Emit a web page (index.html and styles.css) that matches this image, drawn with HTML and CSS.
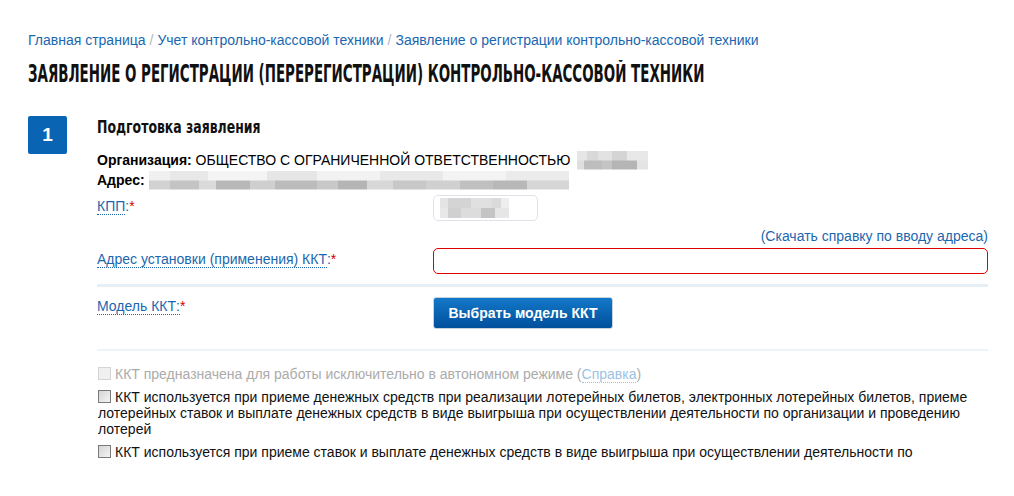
FILE: index.html
```html
<!DOCTYPE html>
<html lang="ru">
<head>
<meta charset="utf-8">
<title>Заявление о регистрации ККТ</title>
<link rel="stylesheet" href="styles.css">
</head>
<body>
<div class="page">
  <nav class="crumbs">
    <a href="#">Главная страница</a><span class="sep">/</span><a href="#">Учет контрольно-кассовой техники</a><span class="sep">/</span><a href="#">Заявление о регистрации контрольно-кассовой техники</a>
  </nav>
  <h1 class="title"><span class="squeeze">ЗАЯВЛЕНИЕ О РЕГИСТРАЦИИ (ПЕРЕРЕГИСТРАЦИИ) КОНТРОЛЬНО-КАССОВОЙ ТЕХНИКИ</span></h1>

  <section class="step">
    <div class="badge">1</div>
    <div class="step-body">
      <h2 class="step-title"><span class="squeeze2">Подготовка заявления</span></h2>
      <div class="info">
        <div class="info-line"><b>Организация:</b> ОБЩЕСТВО С ОГРАНИЧЕННОЙ ОТВЕТСТВЕННОСТЬЮ <span class="blur blur-org"></span></div>
        <div class="info-line"><b>Адрес:</b> <span class="blur blur-addr"></span></div>
      </div>

      <div class="row row-kpp">
        <div class="label"><span class="term">КПП</span>:<span class="req">*</span></div>
        <div class="field"><div class="input input-kpp"><span class="blur blur-kpp"></span></div></div>
      </div>

      <div class="help"><a href="#">(Скачать справку по вводу адреса)</a></div>

      <div class="row row-addr">
        <div class="label"><span class="term">Адрес установки (применения) ККТ</span>:<span class="req">*</span></div>
        <div class="field"><div class="input input-error"></div></div>
      </div>

      <div class="row row-model">
        <div class="label"><span class="term">Модель ККТ:</span><span class="req">*</span></div>
        <div class="field"><button class="btn">Выбрать модель ККТ</button></div>
      </div>

      <div class="checks">
        <label class="check disabled"><span class="box"></span>ККТ предназначена для работы исключительно в автономном режиме (<span class="hint">Справка</span>)</label>
        <label class="check"><span class="box"></span>ККТ используется при приеме денежных средств при реализации лотерейных билетов, электронных лотерейных билетов, приеме лотерейных ставок и выплате денежных средств в виде выигрыша при осуществлении деятельности по организации и проведению лотерей</label>
        <label class="check"><span class="box"></span>ККТ используется при приеме ставок и выплате денежных средств в виде выигрыша при осуществлении деятельности по</label>
      </div>
    </div>
  </section>
</div>
</body>
</html>
```

FILE: styles.css
```css
html, body {
  margin: 0;
  padding: 0;
  background: #fff;
}
body {
  font-family: "Liberation Sans", Arial, sans-serif;
  font-size: 14px;
  color: #000;
}
.page {
  padding: 32px 26px 0 28px;
}
a {
  color: #1a67b0;
  text-decoration: none;
}
.crumbs {
  font-size: 14px;
  line-height: 16px;
  color: #1a67b0;
}
.crumbs .sep {
  color: #b0b8c0;
  margin: 0 4px;
}
.title {
  margin: 12px 0 0 0;
  font-family: "DejaVu Sans Condensed", "DejaVu Sans", sans-serif;
  font-stretch: condensed;
  font-weight: bold;
  font-size: 24px;
  line-height: 28px;
  height: 28px;
  color: #111;
  white-space: nowrap;
  overflow: hidden;
}
.squeeze {
  display: inline-block;
  transform: scaleX(0.621);
  transform-origin: 0 50%;
}
.step {
  display: flex;
  gap: 30px;
  margin-top: 28px;
}
.badge {
  flex: none;
  width: 39px;
  height: 38px;
  background: #0a64b4;
  border-radius: 2px;
  color: #fff;
  font-weight: bold;
  font-size: 19px;
  display: flex;
  align-items: center;
  justify-content: center;
}
.step-body {
  flex: 1;
  min-width: 0;
}
.step-title {
  margin: 1px 0 0 0;
  font-family: "DejaVu Sans Condensed", "DejaVu Sans", sans-serif;
  font-stretch: condensed;
  font-weight: bold;
  font-size: 18px;
  line-height: 20px;
  height: 20px;
  color: #111;
  white-space: nowrap;
  overflow: hidden;
}
.squeeze2 {
  display: inline-block;
  transform: scaleX(0.77);
  transform-origin: 0 50%;
}
.info {
  margin-top: 13px;
}
.info-line {
  line-height: 20px;
  height: 20px;
  display: flex;
  align-items: center;
  white-space: pre;
}
.blur {
  display: inline-block;
}
.blur-org {
  width: 71px;
  height: 19px;
  margin-left: 3px;
  background:
    linear-gradient(90deg, #e6e6e6 0 14%, #d8d8d8 14% 30%, #e2e2e2 30% 50%, #d4d4d4 50% 70%, #e8e8e8 70% 100%) top / 100% 50% no-repeat,
    linear-gradient(90deg, #dedede 0 10%, #bdbdbd 10% 35%, #c4c4c4 35% 50%, #b5b5b5 50% 85%, #e4e4e4 85% 100%) bottom / 100% 50% no-repeat;
}
.blur-addr {
  width: 420px;
  height: 19px;
  margin-left: 4px;
  background:
    linear-gradient(90deg, #f0f0f0 0 5%, #e8e8e8 5% 14%, #f4f4f4 14% 28%, #e6e6e6 28% 40%, #f2f2f2 40% 55%, #e9e9e9 55% 70%, #f3f3f3 70% 85%, #ebebeb 85% 100%) top / 100% 50% no-repeat,
    linear-gradient(90deg, #d2d2d2 0 5%, #c4c4c4 5% 12%, #dadada 12% 16%, #b8b8b8 16% 24%, #cfcfcf 24% 30%, #bcbcbc 30% 40%, #c8c8c8 40% 45%, #b5b5b5 45% 52%, #d8d8d8 52% 58%, #c8c8c8 58% 66%, #d0d0d0 66% 74%, #c0c0c0 74% 82%, #b8b8b8 82% 90%, #d6d6d6 90% 100%) bottom / 100% 50% no-repeat;
}
.row {
  display: flex;
}
.label {
  width: 336px;
  flex: none;
  color: #1a67b0;
  line-height: 16px;
}
.term {
  border-bottom: 1px dotted #1a67b0;
}
.req {
  color: #d40000;
}
.field {
  flex: 1;
}
.row-kpp {
  margin-top: 5px;
}
.row-kpp .label {
  padding-top: 3px;
}
.input {
  box-sizing: border-box;
  height: 26px;
  border: 1px solid #dde3e9;
  border-radius: 5px;
  background: #fff;
}
.input-kpp {
  width: 105px;
  display: flex;
  align-items: center;
  padding-left: 6px;
}
.blur-kpp {
  width: 69px;
  height: 20px;
  background:
    linear-gradient(90deg, #e4e4e4 0 12%, #d4d4d4 12% 45%, #e0e0e0 45% 75%, #dadada 75% 88%, #eeeeee 88% 100%) top / 100% 50% no-repeat,
    linear-gradient(90deg, #e8e8e8 0 12%, #d0d0d0 12% 30%, #dcdcdc 30% 60%, #c4c4c4 60% 80%, #e6e6e6 80% 100%) bottom / 100% 50% no-repeat;
}
.help {
  text-align: right;
  margin-top: 7px;
  line-height: 16px;
}
.row-addr {
  margin-top: 4px;
  padding-bottom: 10px;
  border-bottom: 3px solid #e6eef6;
}
.row-addr .label {
  padding-top: 3px;
}
.input-error {
  border-color: #e00000;
  width: 100%;
}
.row-model {
  padding-top: 10px;
  padding-bottom: 20px;
  border-bottom: 2px solid #eef3f8;
}
.row-model .label {
  padding-top: 1px;
}
.btn {
  height: 32px;
  width: 180px;
  border: 1px solid #c4d2de;
  border-radius: 3px;
  background: linear-gradient(#1378c8, #00509c);
  color: #fff;
  font-family: "Liberation Sans", Arial, sans-serif;
  font-weight: bold;
  font-size: 14px;
  padding: 0;
  cursor: pointer;
}
.checks {
  margin-top: 15px;
  margin-left: 1px;
  display: flex;
  flex-direction: column;
  gap: 7px;
}
.check {
  display: block;
  line-height: 16px;
  color: #111;
}
.box {
  display: inline-block;
  width: 11px;
  height: 11px;
  border: 1px solid #7a7a7a;
  background: linear-gradient(135deg, #d4d4d4, #f4f4f4);
  margin-right: 4px;
  vertical-align: -1px;
}
.check.disabled {
  color: #ababab;
}
.check.disabled .box {
  border-color: #d4d4d4;
  background: #f0f0f0;
}
.hint {
  color: #9cc2e4;
  border-bottom: 1px dotted #9cc2e4;
}
```
